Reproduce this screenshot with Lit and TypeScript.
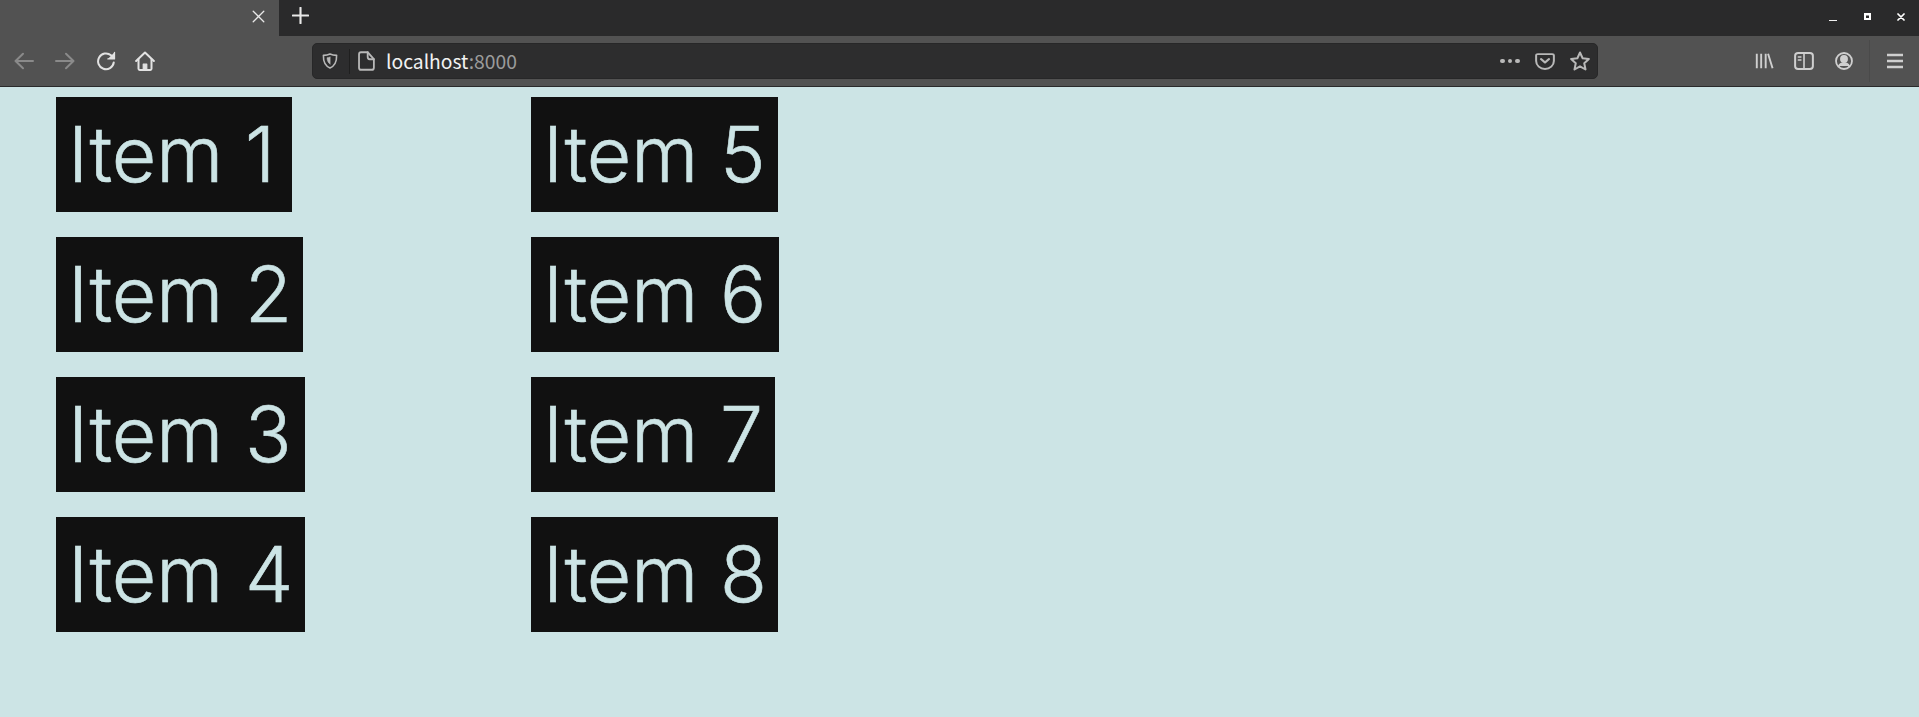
import { LitElement, html, css, svg } from "lit";
import { customElement } from "lit/decorators.js";
import { styleMap } from "lit/directives/style-map.js";

const ic = (body: unknown, w = 16, h = w, vb = "0 0 16 16", sw = 1.6) => html`<svg width=${w} height=${h} viewBox=${vb} preserveAspectRatio="none" fill="none" stroke="currentColor" stroke-width=${sw} stroke-linecap="round" stroke-linejoin="round">${body}</svg>`;

const back = svg`<path d="M15.200 8H1.200M7.200 2.200 1.200 8l6 5.800"/>`;
const forward = svg`<path d="M.8 8h14M8.800 2.200l6 5.800-6 5.800"/>`;
const reload = svg`<path d="M14.200 9.200A6.300 6.300 0 1 1 12 3.400L14.200 5.500"/><path d="M14.800 1v5.300H9.500" fill="currentColor" stroke-width="1"/>`;
const home = svg`<path d="M.9 8 8 1.200 15.100 8"/><path d="M2.800 6.500v7.700c0 .5.3.9.9.9h8.600c.6 0 .9-.4.9-.9V6.500"/><path d="M6.600 15V10.500h2.800V15" fill="currentColor" stroke-width="1"/>`;
const shield = svg`<path d="M8 1c2 .9 4.200 1.300 6.600 1.400C14.800 8.500 12.800 12.900 8 15 3.200 12.900 1.200 8.500 1.400 2.400 3.800 2.300 6 1.900 8 1Z"/><path d="M8 4c-1 .4-2 .6-3 .7 0 2.500.9 5 3 6.400Z" fill="currentColor" stroke-width=".5"/>`;
const page = svg`<path d="M3.500 1h6L15 6.500v6.800c0 1-.7 1.700-1.700 1.700H3.500c-1 0-1.700-.7-1.700-1.700V2.700C1.800 1.700 2.500 1 3.500 1Z"/><path d="M9.500 1v3.800c0 1 .7 1.700 1.700 1.700H15"/>`;
const pocket = svg`<path d="M2.300 1.800h11.400c.8 0 1.400.6 1.400 1.400V8A7.100 7.100 0 0 1 .9 8V3.200c0-.8.6-1.400 1.400-1.400Z"/><path d="M4.800 6.300 8 9.300l3.200-3" stroke-width="1.800"/>`;
const star = svg`<path d="M8 1.200 10.100 5.800l5 .6-3.700 3.400 1 5L8 12.300l-4.400 2.500 1-5L.9 6.400l5-.6Z"/>`;
const library = svg`<path d="M1.500 1.500v13M5.200 1.500v13M9 1.500v13M11 1.500l3.800 13" stroke-linecap="butt"/>`;
const sidebar = svg`<rect x=".9" y=".9" width="14.200" height="14.200" rx="2.400"/><path d="M8 1v14M3.500 4.500h2M3.500 7.200h2" stroke-width="1.300"/>`;
const account = svg`<circle cx="8" cy="8" r="7.100"/><circle cx="8" cy="6.200" r="2.700" fill="currentColor"/><path d="M3.500 12.400c1-1.800 2.800-2.500 4.500-2.500s3.500.7 4.500 2.500" fill="currentColor"/>`;
const menu = svg`<path d="M0 2h16M0 8h16M0 14h16" stroke-linecap="butt"/>`;

const items: [string, number][] = [
  ["Item 1", 236], ["Item 2", 247], ["Item 3", 249], ["Item 4", 249],
  ["Item 5", 247], ["Item 6", 248], ["Item 7", 244], ["Item 8", 247],
];

@customElement("app-root")
export class AppRoot extends LitElement {
  static styles = css`
    :host { display: block; width: 1919px; height: 717px; overflow: hidden; background: #cce4e5; font-family: "Noto Sans CJK JP", "Noto Sans", sans-serif; }
    svg { display: block; flex: none; }
    .tabs { display: flex; height: 36px; background: #2a2a2b; color: #e8e8e8; }
    .tab { width: 279px; background: #525252; display: flex; align-items: center; justify-content: flex-end; padding: 0 14px 3px 0; box-sizing: border-box; }
    .new { margin-left: 13px; display: flex; align-items: center; margin-top: -5px; }
    .spacer { flex: 1; }
    .wc { display: flex; align-items: center; color: #fff; padding-right: 14px; }
    .wc .min { margin-top: 5px; margin-right: 27px; }
    .wc .max { margin-top: -3px; margin-right: 26px; }
    .wc .close { margin-top: -3px; }
    .toolbar { height: 51px; box-sizing: border-box; background: #525252; border-bottom: 1px solid #2a2a2b; display: flex; align-items: center; color: #e2e2e2; }
    .nav { display: flex; align-items: center; width: 312px; padding-left: 14px; gap: 21px; box-sizing: border-box; flex: none; }
    .nav .home { margin-left: -2px; }
    .dim { color: #8a8a8a; }
    .url { width: 1286px; height: 36px; flex: none; background: #2d2d2e; border: 1px solid #272728; border-radius: 5px; box-sizing: border-box; display: flex; align-items: center; color: #b8b8b8; padding-left: 9px; }
    .sep { width: 1px; height: 25px; background: #1f1f1f; margin: 0 7px 0 11px; flex: none; }
    .addr { margin-left: 11px; font-size: 19.300px; line-height: 28px; color: #f2f2f2; flex: 1; }
    .addr span { color: #9b9b9b; }
    .dots { display: flex; gap: 3px; margin-right: 15px; }
    .dots i { width: 4.670px; height: 4.670px; border-radius: 50%; background: #b8b8b8; }
    .acts { display: flex; gap: 15px; align-items: center; padding-right: 7px; }
    .right { flex: 1; display: flex; align-items: center; justify-content: flex-end; color: #cfcfcf; }
    .right .ri { display: flex; align-items: center; padding-right: 16px; border-right: 1px solid #4a4a4a; height: 42px; }
    .right .ri svg:nth-child(1) { margin-right: 20px; }
    .right .ri svg:nth-child(2) { margin-right: 21px; }
    .right .m { padding: 0 16px 0 17px; display: flex; }
    ul { list-style: none; margin: 0; padding: 10px 0 0 56px; display: grid; grid-template-rows: repeat(4, 115.2px); grid-auto-flow: column; grid-auto-columns: 475px; row-gap: 24.800px; }
    li { justify-self: start; box-sizing: border-box; background: #111; color: #cce4e5; font: 300 76.800px/115.200px Inter, sans-serif; -webkit-text-stroke: 0.6px #cce4e5; padding-left: 12px; white-space: nowrap; }
  `;
  render() {
    return html`
      <div class="tabs">
        <div class="tab">${ic(svg`<path d="M1.500 1.500l13 13M14.500 1.500l-13 13"/>`, 13)}</div>
        <div class="new">${ic(svg`<path d="M8 .8v14.400M.8 8h14.400"/>`, 17, 17, "0 0 16 16", 2)}</div>
        <div class="spacer"></div>
        <div class="wc">
          <span class="min">${ic(svg`<path d="M0 8h16" stroke-width="5" stroke-linecap="butt"/>`, 8, 3)}</span>
          <span class="max"><svg width="7" height="7" viewBox="0 0 7 7"><path fill-rule="evenodd" fill="#fff" d="M0 0h7v7H0ZM2 2.500v2.500h3V2.500Z"/></svg></span>
          <span class="close">${ic(svg`<path d="M2 2l12 12M14 2 2 14" stroke-width="3.500"/>`, 8)}</span>
        </div>
      </div>
      <div class="toolbar">
        <div class="nav">
          <span class="dim">${ic(back, 20)}</span>
          <span class="dim">${ic(forward, 20)}</span>
          <span>${ic(reload, 20)}</span>
          <span class="home">${ic(home, 20)}</span>
        </div>
        <div class="url">
          ${ic(shield, 16)}
          <div class="sep"></div>
          ${ic(page, 18, 20)}
          <div class="addr">localhost<span>:8000</span></div>
          <div class="dots"><i></i><i></i><i></i></div>
          <div class="acts">${ic(pocket, 20, 18)}${ic(star, 20)}</div>
        </div>
        <div class="right">
          <div class="ri">${ic(library, 19, 18)}${ic(sidebar, 20, 18)}${ic(account, 18)}</div>
          <div class="m">${ic(menu, 16, 16, "0 0 16 16", 2.600)}</div>
        </div>
      </div>
      <ul>
        ${items.map(([t, w]) => html`<li style=${styleMap({ width: `${w}px` })}>${t}</li>`)}
      </ul>`;
  }
}
